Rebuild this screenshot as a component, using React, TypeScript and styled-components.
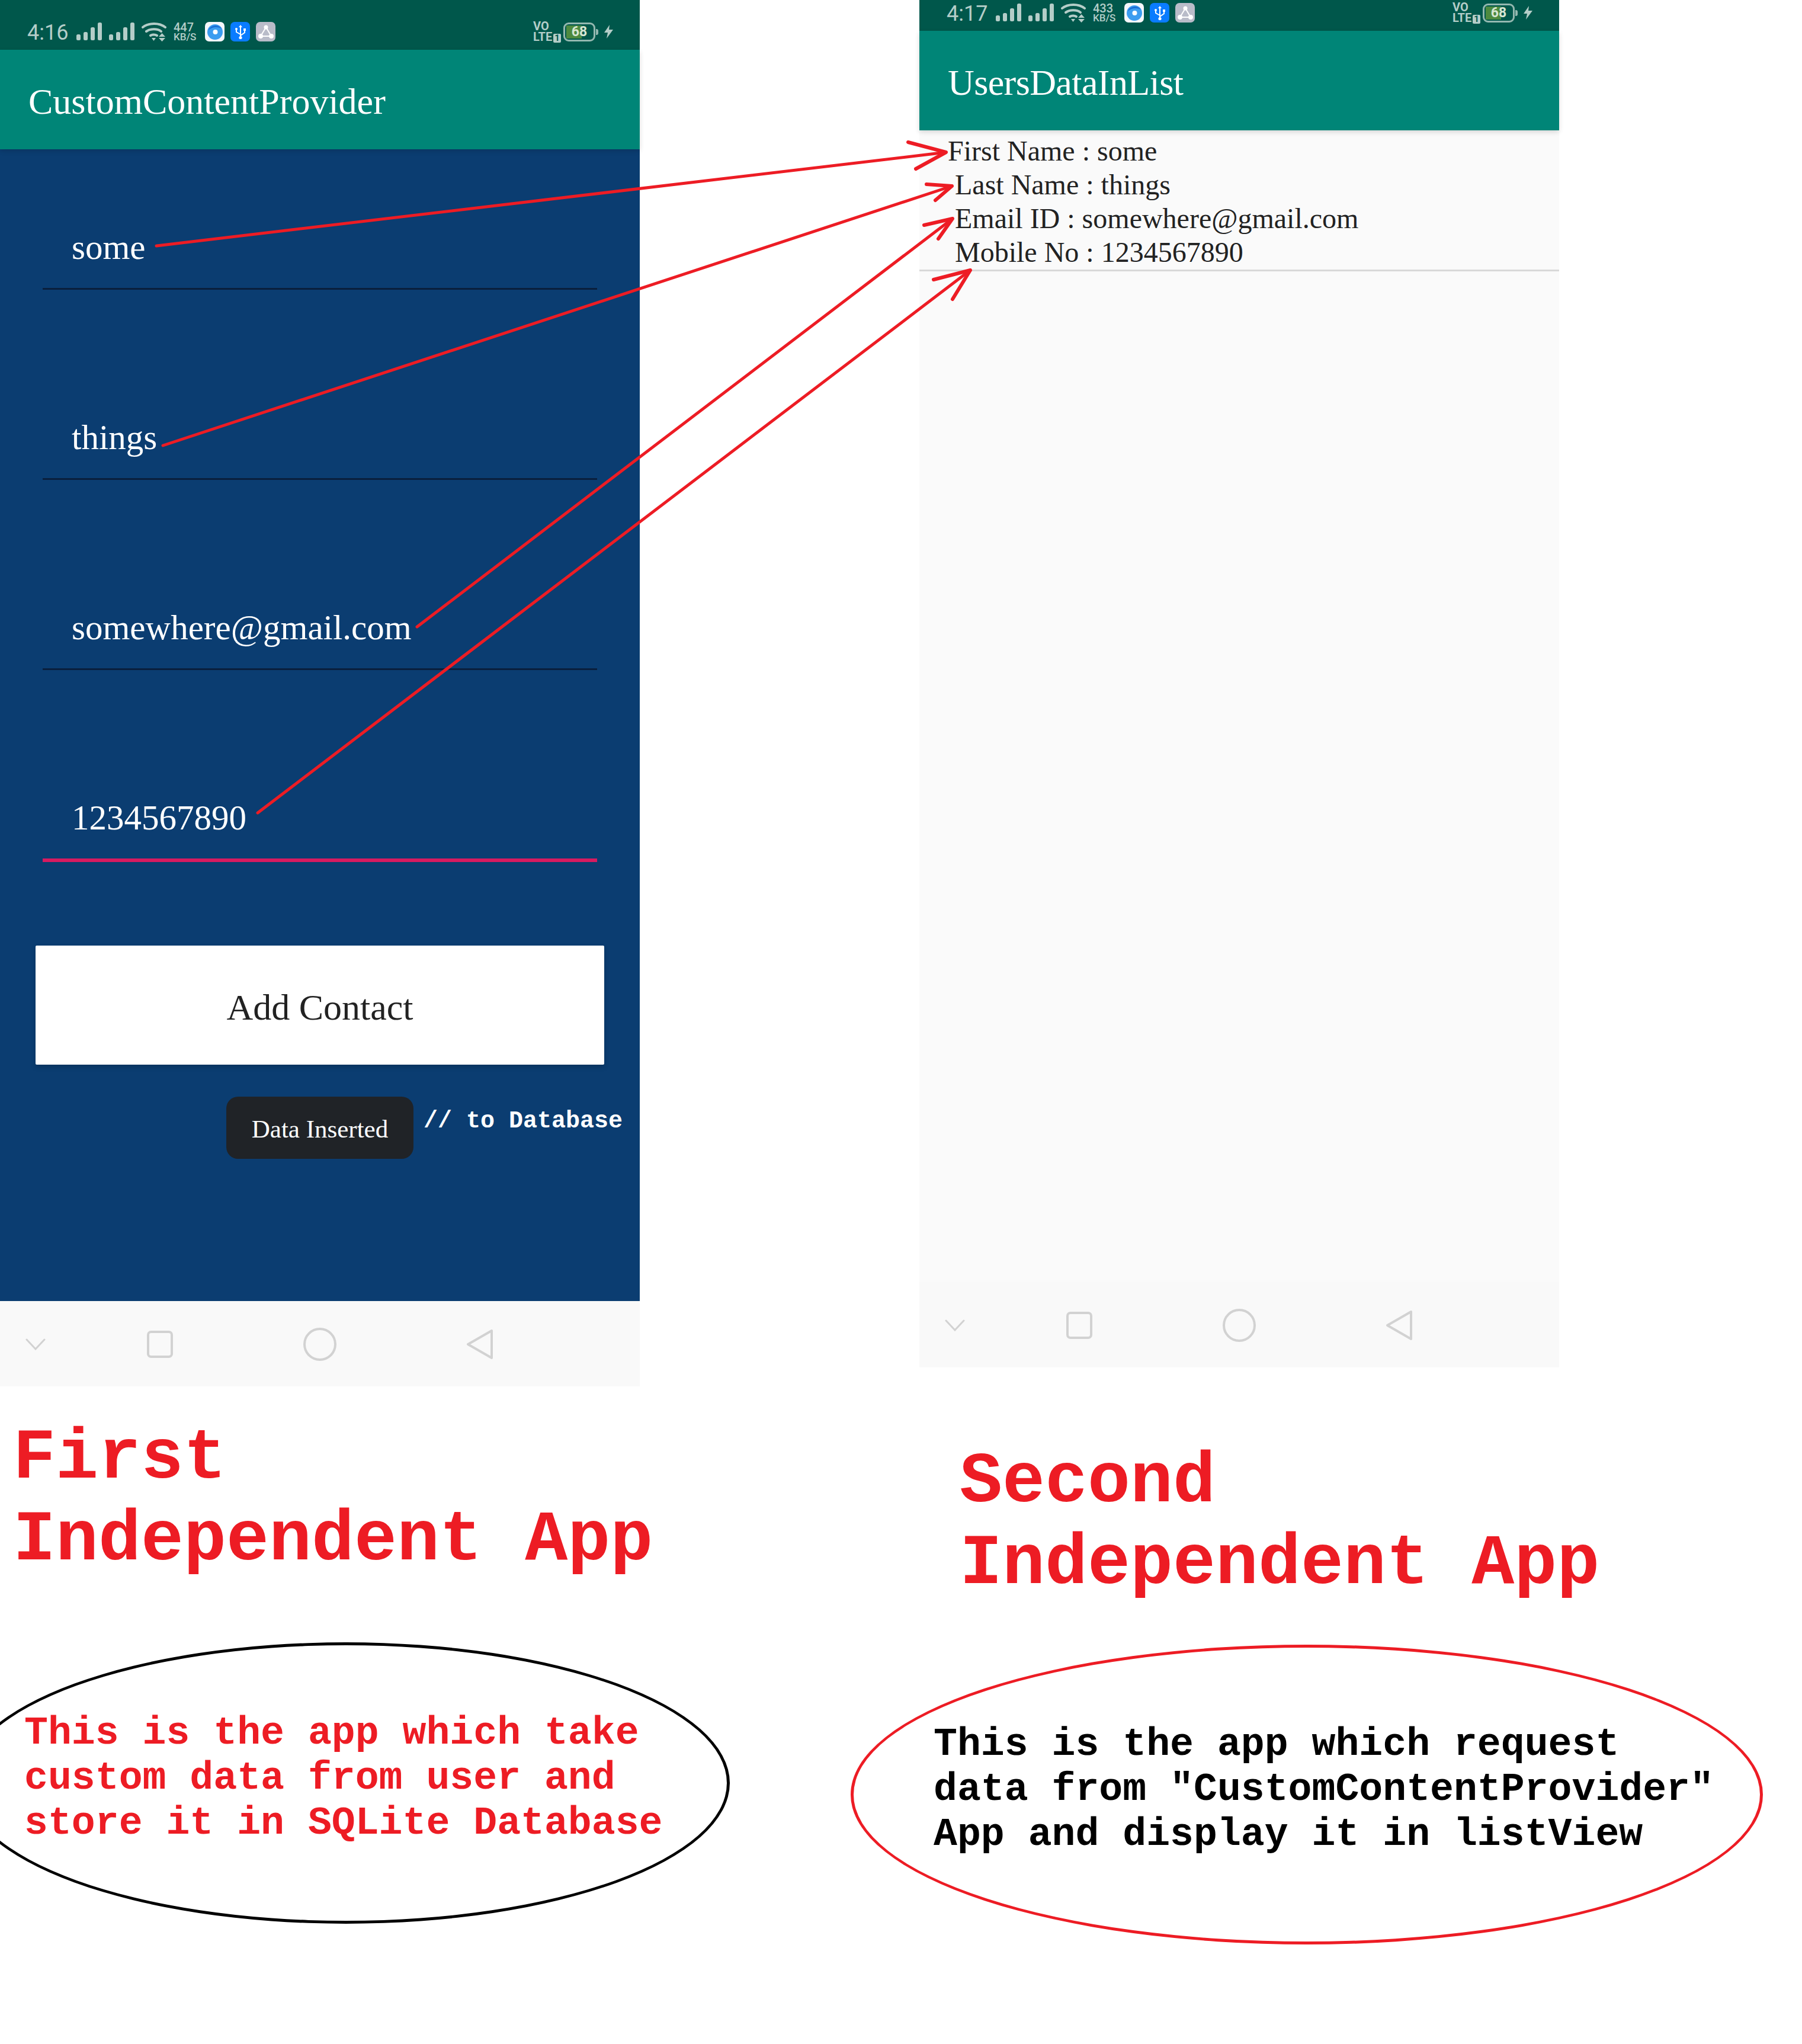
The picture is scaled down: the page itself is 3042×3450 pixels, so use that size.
import React from 'react';
import styled, { createGlobalStyle } from 'styled-components';

const GlobalStyle = createGlobalStyle`
  html, body {
    margin: 0;
    background: #ffffff;
  }
  * {
    box-sizing: border-box;
  }
`;

const SERIF = '"Liberation Serif", "Times New Roman", serif';
const MONO = '"Liberation Mono", "Courier New", monospace';
const ROBOTO = 'Roboto, "Noto Sans", sans-serif';
const RED = '#ed1c24';
const STATUS_TINT = '#b4cdc8';

const Page = styled.div`
  position: relative;
  width: 3042px;
  height: 3450px;
  overflow: hidden;
  display: grid;
  grid-template-columns: 1552px 1490px;
  align-items: start;
  background: #ffffff;
`;

const Column = styled.div<{ $lift?: number }>`
  display: flex;
  flex-direction: column;
  margin-top: ${({ $lift }) => -($lift || 0)}px;
`;

const Phone = styled.div`
  width: 1080px;
  height: 2340px;
  display: flex;
  flex-direction: column;
`;

const StatusBarWrap = styled.div`
  height: 84px;
  padding: 37px 44px 14px 46px;
  display: flex;
  align-items: center;
  background: #00574b;
  color: ${STATUS_TINT};
  font-family: ${ROBOTO};
`;

const Time = styled.span`
  font-size: 36px;
  line-height: 33px;
  width: 68px;
  margin-right: 15px;
  padding-top: 3px;
  white-space: nowrap;
`;

const SignalGroup = styled.div`
  display: flex;
  gap: 11px;
  margin-right: 11px;
`;

const SpeedStack = styled.div`
  width: 53px;
  margin: 0 0 0 10px;
  display: flex;
  flex-direction: column;
  font-weight: 500;
`;

const SpeedValue = styled.span`
  font-size: 20px;
  line-height: 18px;
`;

const SpeedUnit = styled.span`
  font-size: 17px;
  line-height: 15px;
`;

const AppIcon = styled.div<{ $bg: string }>`
  width: 33px;
  height: 33px;
  margin-right: 10px;
  border-radius: 7px;
  background: ${({ $bg }) => $bg};
  display: flex;
  align-items: center;
  justify-content: center;
`;

const StatusRight = styled.div`
  margin-left: auto;
  display: flex;
  align-items: center;
`;

const NetworkStack = styled.div`
  width: 51px;
  display: flex;
  flex-direction: column;
  font-weight: 700;
  font-size: 20px;
  line-height: 18px;
`;

const LteBadge = styled.span`
  display: inline-block;
  margin-left: 2px;
  padding: 0 2px;
  font-size: 15px;
  line-height: 15px;
  color: #00574b;
  background: ${STATUS_TINT};
  border-radius: 2px;
`;

const Battery = styled.div`
  position: relative;
  width: 54px;
  height: 32px;
  margin-right: 14px;
  border: 3px solid #94b8b0;
  border-radius: 9px;
  background: linear-gradient(90deg, #4d8a3f 60%, transparent 60%) no-repeat 2px 2px / calc(100% - 4px) calc(100% - 4px);
  color: #d7e6d2;
  font-size: 23px;
  font-weight: 700;
  line-height: 26px;
  text-align: center;
  &::after {
    content: '';
    position: absolute;
    top: 8px;
    right: -8px;
    width: 4px;
    height: 10px;
    border-radius: 0 3px 3px 0;
    background: #94b8b0;
  }
`;

const AppBar = styled.header<{ $tight?: boolean }>`
  position: relative;
  height: 168px;
  padding: 6px 0 0 48px;
  display: flex;
  align-items: center;
  background: #008577;
  color: #ffffff;
  font-family: ${SERIF};
  font-size: 62px;
  letter-spacing: ${({ $tight }) => ($tight ? '-0.6px' : '0')};
  box-shadow: 0 3px 8px rgba(0, 0, 0, 0.14);
`;

const FormBody = styled.main`
  flex: 1;
  padding-top: 130px;
  display: flex;
  flex-direction: column;
  background: #0b3d71;
`;

const Field = styled.div<{ $active?: boolean }>`
  width: 936px;
  margin: 0 0 ${({ $active }) => ($active ? 0 : 214)}px 72px;
  padding: 0 0 34px 49px;
  border-bottom: ${({ $active }) => ($active ? '6px solid #d81b60' : '3px solid #0a1f3d')};
  color: #ffffff;
  font-family: ${SERIF};
  font-size: 59px;
  line-height: 70px;
`;

const AddButton = styled.button`
  width: 960px;
  height: 201px;
  margin: 141px 0 0 60px;
  padding: 8px 0 0;
  border: none;
  border-radius: 2px;
  background: #ffffff;
  color: #222222;
  font-family: ${SERIF};
  font-size: 62px;
  box-shadow: 0 4px 8px rgba(0, 0, 0, 0.18);
`;

const ToastRow = styled.div`
  margin: 54px 0 0 382px;
  display: flex;
  align-items: flex-start;
`;

const Toast = styled.div`
  width: 316px;
  height: 105px;
  padding-top: 4px;
  display: flex;
  align-items: center;
  justify-content: center;
  border-radius: 20px;
  background: #202327;
  color: #ffffff;
  font-family: ${SERIF};
  font-size: 43px;
`;

const ToastNote = styled.span`
  margin: 19px 0 0 17px;
  color: #ffffff;
  font-family: ${MONO};
  font-size: 40px;
  font-weight: 700;
  line-height: 46px;
  white-space: pre;
`;

const NavBar = styled.nav`
  height: 144px;
  padding-top: 2px;
  display: grid;
  grid-template-columns: 120px 300px 240px 300px;
  justify-items: center;
  align-items: center;
  background: #f9f9f9;
`;

const ListBody = styled.main`
  flex: 1;
  padding-top: 6px;
  background: #fafafa;
`;

const ListRow = styled.div<{ $indent: number }>`
  padding-left: ${({ $indent }) => $indent}px;
  color: #222222;
  font-family: ${SERIF};
  font-size: 48px;
  line-height: 57px;
`;

const ListDivider = styled.div`
  height: 3px;
  margin-top: 1px;
  background: #d8d8d8;
`;

const Caption = styled.h2<{ $top: number; $left: number }>`
  margin: ${({ $top }) => $top}px 0 0 ${({ $left }) => $left}px;
  color: ${RED};
  font-family: ${MONO};
  font-size: 120px;
  font-weight: 700;
  line-height: 138px;
  white-space: pre;
`;

const Bubble = styled.div<{
  $top: number;
  $left: number;
  $width: number;
  $height: number;
  $padTop: number;
  $padLeft: number;
  $stroke: string;
  $ink: string;
}>`
  width: ${({ $width }) => $width}px;
  height: ${({ $height }) => $height}px;
  margin: ${({ $top }) => $top}px 0 0 ${({ $left }) => $left}px;
  padding: ${({ $padTop }) => $padTop}px 0 0 ${({ $padLeft }) => $padLeft}px;
  border: 5px solid ${({ $stroke }) => $stroke};
  border-radius: 50%;
  color: ${({ $ink }) => $ink};
  font-family: ${MONO};
  font-size: 66.5px;
  font-weight: 700;
  line-height: 76px;
  white-space: pre;
`;

const ArrowLayer = styled.svg`
  position: absolute;
  top: 0;
  left: 0;
  pointer-events: none;
`;

const SignalBars = () => (
  <svg width="44" height="31" viewBox="0 0 44 31" fill={STATUS_TINT}>
    <rect x="0" y="20" width="7" height="10" rx="2.5" />
    <rect x="12" y="16" width="7" height="14" rx="2.5" />
    <rect x="24" y="8" width="7" height="22" rx="2.5" />
    <rect x="36" y="0" width="7" height="30" rx="2.5" />
  </svg>
);

const WifiIcon = () => (
  <svg width="44" height="32" viewBox="0 0 44 32" fill="none" stroke={STATUS_TINT} strokeWidth="4" strokeLinecap="round">
    <path d="M2 8 C12 0 30 0 40 8" />
    <path d="M8 15 C15 10 27 10 33 15" />
    <path d="M15 22 C18 20 23 20 26 22" />
    <path d="M17 26 h7 l-3.5 5 z" fill={STATUS_TINT} stroke="none" />
    <path d="M29 24 h11 l-5.5 -6 z M29 26 h11 l-5.5 6 z" fill={STATUS_TINT} stroke="none" />
  </svg>
);

const SwirlGlyph = () => (
  <svg width="30" height="30" viewBox="0 0 30 30">
    <circle cx="15" cy="15" r="13" fill="#3c9df0" />
    <path d="M4 12 C7 3 20 1 26 9 C19 6 10 6 4 12 Z" fill="#1b6fd6" />
    <circle cx="15.5" cy="15" r="4" fill="#ffffff" />
  </svg>
);

const UsbGlyph = () => (
  <svg width="26" height="26" viewBox="0 0 26 26" fill="none" stroke="#ffffff" strokeWidth="2">
    <path d="M13 4 V22 M13 17 L6 13 V9 M13 19 L20 14 V10" />
    <path d="M13 1 L16 5 H10 Z" fill="#ffffff" stroke="none" />
    <circle cx="13" cy="22.5" r="2.6" fill="#ffffff" stroke="none" />
    <circle cx="6" cy="8" r="2" fill="#ffffff" stroke="none" />
    <rect x="18" y="7" width="4" height="4" fill="#ffffff" stroke="none" />
  </svg>
);

const NodesGlyph = () => (
  <svg width="28" height="28" viewBox="0 0 28 28" fill="#ffffff" stroke="#ffffff" strokeWidth="2">
    <path d="M14 6 L5 21 H23 Z" fill="none" />
    <circle cx="14" cy="6" r="2.5" />
    <circle cx="5" cy="21" r="3" />
    <circle cx="23" cy="21" r="3" />
  </svg>
);

const BoltIcon = () => (
  <svg width="17" height="23" viewBox="0 0 17 23" fill={STATUS_TINT}>
    <path d="M10 0 L1 13 H7 L5 23 L16 8 H9 Z" />
  </svg>
);

const StatusBar = ({ time, speed }: { time: string; speed: string }) => (
  <StatusBarWrap>
    <Time>{time}</Time>
    <SignalGroup>
      <SignalBars />
      <SignalBars />
    </SignalGroup>
    <WifiIcon />
    <SpeedStack>
      <SpeedValue>{speed}</SpeedValue>
      <SpeedUnit>KB/S</SpeedUnit>
    </SpeedStack>
    <AppIcon $bg="#f6f7fb">
      <SwirlGlyph />
    </AppIcon>
    <AppIcon $bg="#0a7cff">
      <UsbGlyph />
    </AppIcon>
    <AppIcon $bg="#b9bcc9">
      <NodesGlyph />
    </AppIcon>
    <StatusRight>
      <NetworkStack>
        <span>VO</span>
        <span>
          LTE<LteBadge>1</LteBadge>
        </span>
      </NetworkStack>
      <Battery>68</Battery>
      <BoltIcon />
    </StatusRight>
  </StatusBarWrap>
);

const NavKeys = () => (
  <NavBar>
    <svg width="34" height="20" viewBox="0 0 34 20" fill="none" stroke="#d2d2d2" strokeWidth="3" strokeLinecap="round">
      <path d="M2 2 L17 18 L32 2" />
    </svg>
    <svg width="44" height="46" viewBox="0 0 44 46" fill="none" stroke="#d2d2d2" strokeWidth="4">
      <rect x="2" y="2" width="40" height="42" rx="5" />
    </svg>
    <svg width="56" height="56" viewBox="0 0 56 56" fill="none" stroke="#d2d2d2" strokeWidth="4">
      <circle cx="28" cy="28" r="26" />
    </svg>
    <svg width="46" height="52" viewBox="0 0 46 52" fill="none" stroke="#d2d2d2" strokeWidth="4" strokeLinejoin="round">
      <path d="M43 3 V49 L3 26 Z" />
    </svg>
  </NavBar>
);

const ARROWS = [
  { from: [264, 415], tip: [1597, 257], arms: [[1533, 240], [1546, 285]] },
  { from: [275, 752], tip: [1607, 314], arms: [[1564, 311], [1579, 338]] },
  { from: [704, 1058], tip: [1608, 369], arms: [[1560, 380], [1584, 403]] },
  { from: [435, 1372], tip: [1638, 456], arms: [[1576, 472], [1608, 505]] },
];

const Arrows = () => (
  <ArrowLayer width="3042" height="3450" viewBox="0 0 3042 3450" fill="none" stroke={RED} strokeLinecap="round" strokeLinejoin="round">
    {ARROWS.map(({ from, tip, arms }) => (
      <g key={from.join()}>
        <path d={`M${from[0]} ${from[1]} L${tip[0]} ${tip[1]}`} strokeWidth="5" />
        <path d={`M${arms[0][0]} ${arms[0][1]} L${tip[0]} ${tip[1]} L${arms[1][0]} ${arms[1][1]}`} strokeWidth="6" />
      </g>
    ))}
  </ArrowLayer>
);

const App = () => (
  <Page>
    <GlobalStyle />
    <Column>
      <Phone>
        <StatusBar time="4:16" speed="447" />
        <AppBar>CustomContentProvider</AppBar>
        <FormBody>
          <Field>some</Field>
          <Field>things</Field>
          <Field>somewhere@gmail.com</Field>
          <Field $active>1234567890</Field>
          <AddButton>Add Contact</AddButton>
          <ToastRow>
            <Toast>Data Inserted</Toast>
            <ToastNote>// to Database</ToastNote>
          </ToastRow>
        </FormBody>
        <NavKeys />
      </Phone>
      <Caption $top={53} $left={22}>{'First\nIndependent App'}</Caption>
      <Bubble
        $top={103}
        $left={-64}
        $width={1296}
        $height={475}
        $padTop={111}
        $padLeft={100}
        $stroke="#000000"
        $ink={RED}
      >
        {'This is the app which take\ncustom data from user and\nstore it in SQLite Database'}
      </Bubble>
    </Column>
    <Column $lift={32}>
      <Phone>
        <StatusBar time="4:17" speed="433" />
        <AppBar $tight>UsersDataInList</AppBar>
        <ListBody>
          <ListRow $indent={48}>First Name : some</ListRow>
          <ListRow $indent={60}>Last Name : things</ListRow>
          <ListRow $indent={60}>Email ID : somewhere@gmail.com</ListRow>
          <ListRow $indent={60}>Mobile No : 1234567890</ListRow>
          <ListDivider />
        </ListBody>
        <NavKeys />
      </Phone>
      <Caption $top={125} $left={68}>{'Second\nIndependent App'}</Caption>
      <Bubble
        $top={67}
        $left={-116}
        $width={1540}
        $height={506}
        $padTop={126}
        $padLeft={135}
        $stroke={RED}
        $ink="#000000"
      >
        {'This is the app which request\ndata from "CustomContentProvider"\nApp and display it in listView'}
      </Bubble>
    </Column>
    <Arrows />
  </Page>
);

export default App;
